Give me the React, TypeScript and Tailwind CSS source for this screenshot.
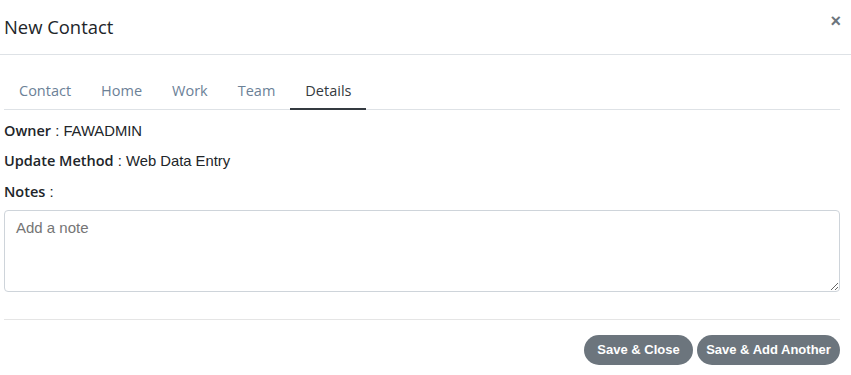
import React from "react";

export default function App() {
  const tabs = ["Contact", "Home", "Work", "Team", "Details"];
  return (
    <div className="w-[851px] h-[375px] bg-white overflow-hidden">
      <div className="flex items-center justify-between h-[55px] border-b border-[#dee2e6] pl-[4px] pr-[10px]">
        <h1 className="text-[18.4px] text-[#212529] font-medium font-['Open_Sans',sans-serif]">New Contact</h1>
        <button className="text-[#6c757d] text-[18px] font-bold leading-none mb-[12px] font-['Liberation_Sans',Arial,sans-serif]">
          ×
        </button>
      </div>
      <div className="pl-[4px] pr-[11px]">
        <div className="flex border-b border-[#dee2e6] mt-[19px] h-[36px]">
          {tabs.map((t) => (
            <div
              key={t}
              className={
                t === "Details"
                  ? "px-[15px] h-[36px] flex items-center text-[14.5px] font-['Open_Sans',sans-serif] text-[#343a40] border-b-2 border-[#343a40]"
                  : "px-[15px] h-[36px] flex items-center text-[14.5px] font-['Open_Sans',sans-serif] text-[#6c8197] border-b-2 border-transparent"
              }
            >
              {t}
            </div>
          ))}
        </div>
        <div className="flex flex-col gap-[10px] mt-[10px] leading-[20px] text-[#212529]">
          <div className="h-[20px]">
            <span className="text-[14.5px] font-semibold font-['Open_Sans',sans-serif]">Owner</span>
            <span className="text-[14.8px] font-['Liberation_Sans',Arial,sans-serif]"> : FAWADMIN</span>
          </div>
          <div className="h-[20px]">
            <span className="text-[14.5px] font-semibold font-['Open_Sans',sans-serif]">Update Method</span>
            <span className="text-[14.8px] font-['Liberation_Sans',Arial,sans-serif]"> : Web Data Entry</span>
          </div>
          <div className="h-[20px] mt-[1px]">
            <span className="text-[14.5px] font-semibold font-['Open_Sans',sans-serif]">Notes</span>
            <span className="text-[14.8px] font-['Liberation_Sans',Arial,sans-serif]"> :</span>
          </div>
        </div>
        <textarea
          placeholder="Add a note"
          className="block mt-[9px] w-full h-[82px] border border-[#ced4da] rounded-[4px] px-[11px] pt-[6px] pb-[8px] text-[15px] text-[#495057] placeholder:text-[#757575] outline-none font-['Liberation_Sans',Arial,sans-serif]"
        />
        <div className="border-t border-[#e5e5e5] mt-[27px]" />
        <div className="flex justify-end gap-[4px] mt-[15px]">
          <button className="h-[30px] w-[109px] rounded-full bg-[#6c757d] text-white text-[13px] font-bold font-['Liberation_Sans',Arial,sans-serif]">
            Save &amp; Close
          </button>
          <button className="h-[30px] w-[143px] rounded-full bg-[#6c757d] text-white text-[13px] font-bold font-['Liberation_Sans',Arial,sans-serif]">
            Save &amp; Add Another
          </button>
        </div>
      </div>
    </div>
  );
}
